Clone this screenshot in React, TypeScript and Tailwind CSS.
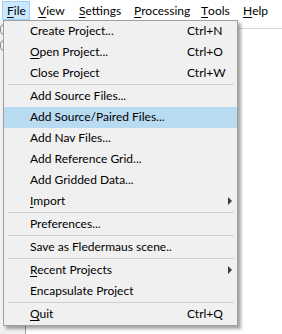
import React from 'react';

type Entry =
  | '-'
  | {
      label: string;
      mnemonic?: number;
      shortcut?: string;
      submenu?: boolean;
      active?: boolean;
    };

const MENUBAR = [
  { label: 'File', width: 'w-[28px]', open: true },
  { label: 'View', width: 'w-[41px]' },
  { label: 'Settings', width: 'w-[55px]' },
  { label: 'Processing', width: 'w-[67px]' },
  { label: 'Tools', width: 'w-[42px]' },
  { label: 'Help', width: 'w-[30px]' },
];

const FILE_MENU: Entry[] = [
  { label: 'Create Project...', shortcut: 'Ctrl+N' },
  { label: 'Open Project...', mnemonic: 0, shortcut: 'Ctrl+O' },
  { label: 'Close Project', shortcut: 'Ctrl+W' },
  '-',
  { label: 'Add Source Files...' },
  { label: 'Add Source/Paired Files...', active: true },
  { label: 'Add Nav Files...' },
  { label: 'Add Reference Grid...' },
  { label: 'Add Gridded Data...' },
  { label: 'Import', mnemonic: 0, submenu: true },
  '-',
  { label: 'Preferences...' },
  '-',
  { label: 'Save as Fledermaus scene..' },
  '-',
  { label: 'Recent Projects', mnemonic: 0, submenu: true },
  { label: 'Encapsulate Project' },
  '-',
  { label: 'Quit', mnemonic: 0, shortcut: 'Ctrl+Q' },
];

function Mnemonic({ text, index }: { text: string; index?: number }) {
  if (index === undefined) return <>{text}</>;
  return (
    <>
      {text.slice(0, index)}
      <span className="underline decoration-1 underline-offset-[2px]">{text[index]}</span>
      {text.slice(index + 1)}
    </>
  );
}

function SubArrow() {
  return (
    <svg width="4" height="8" viewBox="0 0 4 8" className="fill-[#3c3c3c]">
      <path d="M0 0 L4 4 L0 8 Z" />
    </svg>
  );
}

export default function App() {
  return (
    <div className="relative w-[282px] h-[334px] overflow-hidden bg-white font-['Segoe_UI','Lato',sans-serif] text-[12px] text-black leading-none">
      {/* Menu bar */}
      <div className="flex h-[20px] items-stretch bg-white pt-[1px]">
        {MENUBAR.map((m) => (
          <div
            key={m.label}
            className={
              m.open
                ? 'ml-[2px] mr-[8px] w-[28px] h-[19px] flex items-center pl-[4px] bg-[#cce8ff] border border-[#99d1ff]'
                : `${m.width} shrink-0 flex items-center`
            }
          >
            <Mnemonic text={m.label} index={0} />
          </div>
        ))}
      </div>

      {/* Window content behind the menu */}
      <div className="flex h-[314px]">
        <div className="w-[26px] bg-[#f0f0f0] border-r border-[#a0a0a0] flex flex-col gap-[5px] pt-[4px]">
          <div className="w-[20px] h-[11px] rounded-[4px] border border-[#8a8a8a]" />
          <div className="w-[20px] h-[11px] rounded-[4px] border border-[#8a8a8a]" />
        </div>
        <div className="flex-1 flex flex-col">
          <div className="h-[9px] border-b border-[#d9d9d9]" />
        </div>
      </div>

      {/* Open File menu */}
      <div className="absolute left-[3px] top-[20px] w-[235px] border border-[#a0a0a0] bg-[#f0f0f0] shadow-[3px_3px_3px_rgba(0,0,0,0.35)]">
        {FILE_MENU.map((e, i) =>
          e === '-' ? (
            <div key={i} className="ml-[4px] mr-[3px] mb-[1px] h-px bg-[#cfcfcf]" />
          ) : (
            <div
              key={i}
              className={`flex h-[21px] items-center pl-[26px] pr-[5px] pb-px ${
                e.active ? 'bg-[#b9dbf1]' : ''
              }`}
            >
              <span className="w-[157px] shrink-0 whitespace-nowrap">
                <Mnemonic text={e.label} index={e.mnemonic} />
              </span>
              {e.shortcut && <span>{e.shortcut}</span>}
              {e.submenu && (
                <span className="ml-auto flex items-center">
                  <SubArrow />
                </span>
              )}
            </div>
          )
        )}
      </div>
    </div>
  );
}
